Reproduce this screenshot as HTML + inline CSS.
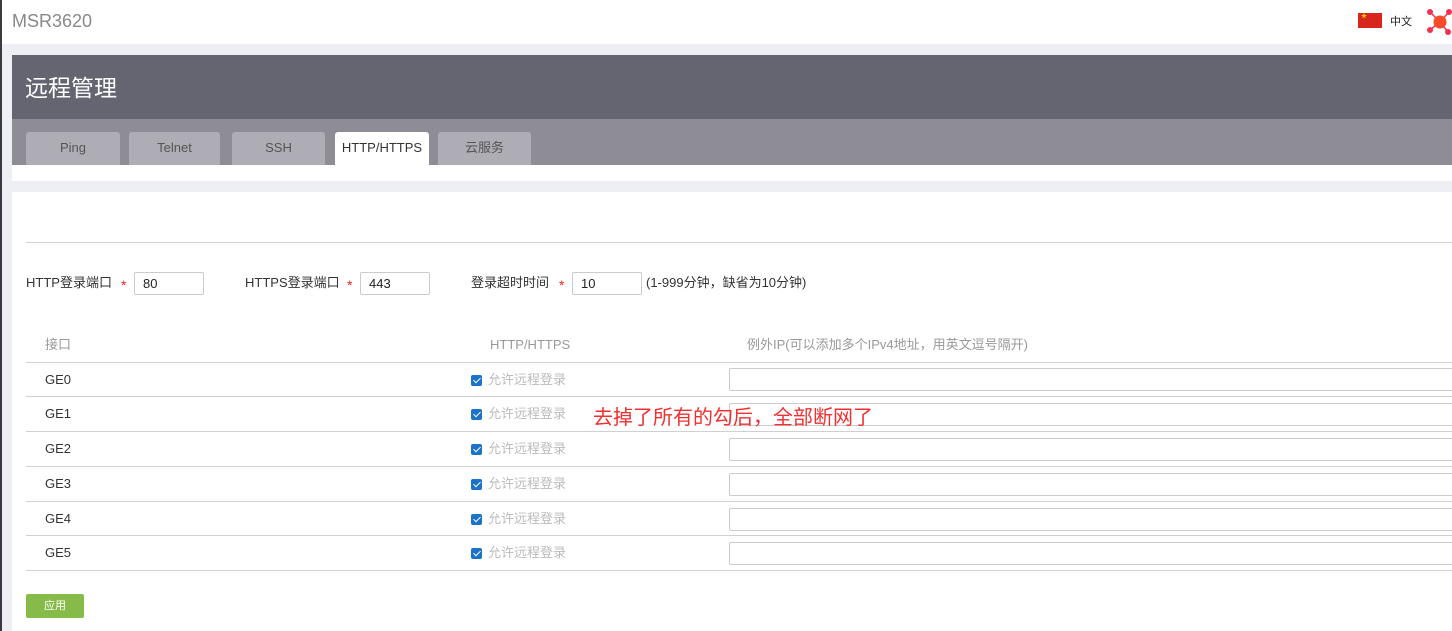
<!DOCTYPE html>
<html><head><meta charset="utf-8"><style>
*{margin:0;padding:0;box-sizing:border-box}
body{width:1452px;height:631px;overflow:hidden;background:#eeeef5;font-family:"Liberation Sans","Noto Sans CJK SC",sans-serif;position:relative;font-size:13px;color:#333;line-height:16px}
.a{position:absolute}
.tab{position:absolute;top:132px;height:33px;background:#aeacb5;border-radius:3px 3px 0 0;color:#555;font-size:13px;text-align:center;line-height:32px}
.inp{position:absolute;height:23px;border:1px solid #ccc;border-radius:2px;background:#fff;font-size:13px;line-height:21px;padding-left:8px;color:#222}
.star{position:absolute;color:#e22;font-size:14px}
.line{position:absolute;left:26px;right:0;height:1px;background:#d0d0d0}
.cb{position:absolute;left:471px;width:11px;height:11px;background:#1a73c8;border-radius:2px}
.cb:after{content:"";position:absolute;left:3.5px;top:1px;width:3px;height:6px;border:solid #fff;border-width:0 1.5px 1.5px 0;transform:rotate(45deg)}
.g{position:absolute;left:488px;color:#bbb}
</style></head><body>
<div class="a" style="left:0;top:0;width:2px;height:631px;background:#3a3a40"></div>
<div class="a" style="left:2px;top:0;right:0;height:44px;background:#fff"></div>
<div class="a" style="left:12px;top:11px;font-size:18px;color:#888;line-height:20px">MSR3620</div>
<div class="a" style="left:1358px;top:13px;width:24px;height:15px;background:#d8261c"><span style="position:absolute;left:3px;top:1px;color:#ffde00;font-size:6px;line-height:6px">★</span></div>
<div class="a" style="left:1390px;top:14px;font-size:11px;color:#222">中文</div>
<svg class="a" style="left:1426px;top:8px" width="26" height="28"><g stroke="#f5304e" stroke-width="1.5"><line x1="14" y1="14" x2="4" y2="4"/><line x1="14" y1="14" x2="23" y2="4"/><line x1="14" y1="14" x2="4" y2="22"/><line x1="14" y1="14" x2="22" y2="24"/></g><circle cx="4" cy="4" r="3" fill="#f5304e"/><circle cx="23" cy="4" r="3" fill="#f5304e"/><circle cx="4" cy="22" r="3" fill="#f5304e"/><circle cx="22" cy="24" r="3" fill="#f5304e"/><circle cx="14" cy="14" r="6.5" fill="#fa4a2a"/></svg>
<div class="a" style="left:12px;top:55px;right:0;height:64px;background:#646570"></div>
<div class="a" style="left:25px;top:73px;font-size:23px;color:#fff;line-height:30px">远程管理</div>
<div class="a" style="left:12px;top:119px;right:0;height:46px;background:#8e8c95"></div>
<div class="tab" style="left:26px;width:94px">Ping</div>
<div class="tab" style="left:129px;width:91px">Telnet</div>
<div class="tab" style="left:232px;width:93px">SSH</div>
<div class="tab" style="left:335px;width:94px;background:#fff;color:#333">HTTP/HTTPS</div>
<div class="tab" style="left:438px;width:93px">云服务</div>
<div class="a" style="left:12px;top:165px;right:0;height:16px;background:#fff"></div>
<div class="a" style="left:12px;top:192px;right:0;bottom:0;background:#fff"></div>
<div class="line" style="top:242px"></div>
<div class="a" style="left:26px;top:275px">HTTP登录端口</div>
<div class="star" style="left:121px;top:277px">*</div>
<div class="inp" style="left:134px;top:272px;width:70px">80</div>
<div class="a" style="left:245px;top:275px">HTTPS登录端口</div>
<div class="star" style="left:347px;top:277px">*</div>
<div class="inp" style="left:360px;top:272px;width:70px">443</div>
<div class="a" style="left:471px;top:275px">登录超时时间</div>
<div class="star" style="left:559px;top:277px">*</div>
<div class="inp" style="left:572px;top:272px;width:70px">10</div>
<div class="a" style="left:646px;top:275px">(1-999分钟，缺省为10分钟)</div>
<div class="a" style="left:45px;top:337px;color:#999">接口</div>
<div class="a" style="left:490px;top:337px;color:#999">HTTP/HTTPS</div>
<div class="a" style="left:747px;top:337px;color:#999">例外IP(可以添加多个IPv4地址，用英文逗号隔开)</div>
<div class="line" style="top:362px"></div>
<div class="a" style="left:45px;top:372px">GE0</div><div class="cb" style="top:375px"></div><div class="g" style="top:372px">允许远程登录</div><div class="inp" style="left:729px;top:368px;width:740px"></div>
<div class="line" style="top:396px"></div>
<div class="a" style="left:45px;top:406px">GE1</div><div class="cb" style="top:409px"></div><div class="g" style="top:406px">允许远程登录</div><div class="inp" style="left:729px;top:403px;width:740px"></div>
<div class="line" style="top:431px"></div>
<div class="a" style="left:45px;top:441px">GE2</div><div class="cb" style="top:444px"></div><div class="g" style="top:441px">允许远程登录</div><div class="inp" style="left:729px;top:438px;width:740px"></div>
<div class="line" style="top:466px"></div>
<div class="a" style="left:45px;top:476px">GE3</div><div class="cb" style="top:479px"></div><div class="g" style="top:476px">允许远程登录</div><div class="inp" style="left:729px;top:473px;width:740px"></div>
<div class="line" style="top:501px"></div>
<div class="a" style="left:45px;top:511px">GE4</div><div class="cb" style="top:514px"></div><div class="g" style="top:511px">允许远程登录</div><div class="inp" style="left:729px;top:508px;width:740px"></div>
<div class="line" style="top:535px"></div>
<div class="a" style="left:45px;top:545px">GE5</div><div class="cb" style="top:548px"></div><div class="g" style="top:545px">允许远程登录</div><div class="inp" style="left:729px;top:542px;width:740px"></div>
<div class="line" style="top:570px"></div>
<div class="a" style="left:593px;top:405px;font-size:20px;color:#f03030;line-height:26px">去掉了所有的勾后，全部断网了</div>
<div class="a" style="left:26px;top:594px;width:58px;height:24px;background:#86bb4a;border-radius:2px;color:#fff;font-size:11px;text-align:center;line-height:24px">应用</div>
</body></html>
